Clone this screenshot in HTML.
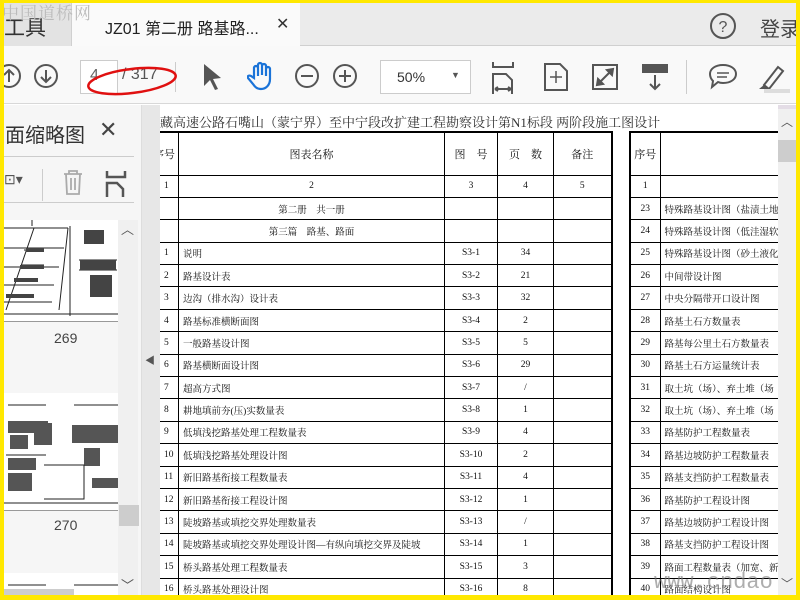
<!DOCTYPE html>
<html><head><meta charset="utf-8">
<style>
*{margin:0;padding:0;box-sizing:border-box}
body{width:800px;height:600px;overflow:hidden;background:#ffe800;font-family:"Liberation Sans","Noto Sans CJK SC",sans-serif;position:relative}
#app{position:absolute;left:4px;top:3px;width:792px;height:592px;background:#fff;overflow:hidden}
.abs{position:absolute}
#tabbar{left:0;top:0;width:792px;height:43px;background:#ebebeb;border-bottom:1px solid #d0d0d0}
#toolbar{left:0;top:43px;width:792px;height:58px;background:#f9f9f9;border-bottom:1px solid #d8d8d8}
#left{left:0;top:102px;width:141px;height:490px;background:#f6f6f6}
#strip{left:137px;top:102px;width:19px;height:490px;background:#e7e7e7;border-left:1px solid #ddd}
#doc{left:156px;top:102px;width:618px;height:490px;background:#fff;overflow:hidden}
#vs{left:774px;top:102px;width:18px;height:490px;background:#f0f0f0}
table{border-collapse:collapse;table-layout:fixed;position:absolute;font-family:"Liberation Serif","Noto Serif CJK SC",serif;font-size:9.5px;color:#111}
td{border:1px solid #000;height:22.4px;padding:0 0 0 4px;white-space:nowrap;overflow:hidden}
td.c{text-align:center;padding:0}
td.s{padding-left:15px}
tr.h td{height:43px;font-size:11px}
.ico{stroke:#555;fill:none;stroke-width:2}
</style></head><body>
<div id="app">
 <div class="abs" id="tabbar">
  <div class="abs" style="left:-4px;top:0;width:72px;height:43px;background:#e3e3e3;border-right:1px solid #d0d0d0"></div>
  <div class="abs" style="left:0;top:9px;font-size:21px;color:#333">工具</div>
  <div class="abs" style="left:68px;top:0;width:228px;height:44px;background:#fafafa"></div>
  <div class="abs" style="left:101px;top:12px;font-size:16px;color:#222;white-space:nowrap">JZ01 第二册 路基路...</div>
  <div class="abs" style="left:272px;top:11px;font-size:16px;color:#333">✕</div>
  <svg class="abs" style="left:704px;top:8px" width="30" height="30"><circle cx="15" cy="15" r="12" class="ico"/><text x="15" y="21" text-anchor="middle" font-size="16" fill="#555" font-family="Liberation Sans">?</text></svg>
  <div class="abs" style="left:756px;top:10px;font-size:20px;color:#444;white-space:nowrap">登录</div>
  <div class="abs" style="left:-2px;top:-4px;font-size:17px;color:#bbb;letter-spacing:1px;font-family:'Noto Serif CJK SC',serif;white-space:nowrap">中国道桥网</div>
 </div>
 <div class="abs" id="toolbar">
  <svg class="abs" style="left:-8px;top:17px" width="26" height="26"><circle cx="13" cy="13" r="11" class="ico"/><path d="M13 19V7M8 12l5-5 5 5" class="ico"/></svg>
  <svg class="abs" style="left:29px;top:17px" width="26" height="26"><circle cx="13" cy="13" r="11" class="ico"/><path d="M13 7v12M8 14l5 5 5-5" class="ico"/></svg>
  <div class="abs" style="left:76px;top:14px;width:38px;height:34px;background:#fff;border:1px solid #ccc;font-size:16px;color:#666;padding:6px 0 0 9px">4</div>
  <div class="abs" style="left:118px;top:20px;font-size:16px;color:#555;white-space:nowrap">/ 317</div>
  <div class="abs" style="left:171px;top:16px;width:1px;height:30px;background:#ccc"></div>
  <svg class="abs" style="left:80px;top:14px" width="100" height="44"><ellipse cx="48" cy="21" rx="44" ry="12" fill="none" stroke="#e01010" stroke-width="2.5" transform="rotate(-7 48 21)"/></svg>
  <svg class="abs" style="left:196px;top:16px" width="24" height="30"><path d="M4 2v22l6-6 5 10 3-1-5-10 8-1z" fill="#555"/></svg>
  <svg class="abs" style="left:243px;top:14px" width="32" height="32"><path d="M7 18V8a2 2 0 014 0v8V5a2 2 0 014 0v10V6a2 2 0 014 0v10V9a2 2 0 014 0v10c0 6-4 10-9 10-4 0-6-2-8-5l-5-6c-1-2 1-3 3-2z" fill="none" stroke="#1a73d8" stroke-width="2.2"/></svg>
  <svg class="abs" style="left:290px;top:17px" width="26" height="26"><circle cx="13" cy="13" r="11" class="ico"/><path d="M7 13h12" class="ico"/></svg>
  <svg class="abs" style="left:328px;top:17px" width="26" height="26"><circle cx="13" cy="13" r="11" class="ico"/><path d="M7 13h12M13 7v12" class="ico"/></svg>
  <div class="abs" style="left:376px;top:14px;width:91px;height:34px;background:#fff;border:1px solid #ccc;font-size:14px;color:#333;padding:8px 0 0 16px">50%<span style="position:absolute;left:70px;top:9px;font-size:9px;color:#555">▼</span></div>
  <svg class="abs" style="left:486px;top:16px" width="28" height="32"><path d="M3 0v5h20V0M3 32V12h13l6 6v14M5 27h16M5 27l3-2M5 27l3 2M21 27l-3-2M21 27l-3 2" class="ico"/></svg>
  <svg class="abs" style="left:538px;top:16px" width="28" height="30"><path d="M3 2h15l7 7v19H3z" class="ico"/><path d="M14 9v12M8 15h12" stroke="#555" stroke-width="1.5"/></svg>
  <svg class="abs" style="left:587px;top:17px" width="28" height="28"><rect x="2" y="2" width="24" height="24" class="ico"/><path d="M10 18l9-9M6 22l6-1-5-5zM22 6l-6 1 5 5z" fill="#555" stroke="#555" stroke-width="2"/></svg>
  <svg class="abs" style="left:636px;top:16px" width="30" height="30"><rect x="2" y="2" width="26" height="9" fill="#555"/><path d="M15 13v14M10 22l5 5 5-5" class="ico"/></svg>
  <div class="abs" style="left:682px;top:14px;width:1px;height:34px;background:#ccc"></div>
  <svg class="abs" style="left:703px;top:16px" width="32" height="30"><path d="M16 3c8 0 13 4 13 9s-5 9-13 9c-2 0-3 0-5-1l-6 5 1-6C4 17 3 15 3 12c0-5 5-9 13-9z" class="ico"/><path d="M10 11h12M10 15h10" stroke="#555" stroke-width="1.5"/></svg>
  <svg class="abs" style="left:750px;top:15px" width="36" height="34"><path d="M10 24l14-18 5 4-14 18z" class="ico"/><path d="M5 28l5-4 4 4z" fill="#555"/><rect x="10" y="28" width="26" height="4" fill="#ddd"/></svg>
 </div>
 <div class="abs" id="left">
  <div class="abs" style="left:1px;top:14px;font-size:20px;color:#333;white-space:nowrap">面缩略图</div>
  <div class="abs" style="left:95px;top:12px;font-size:22px;color:#444">✕</div>
  <div class="abs" style="left:0;top:51px;width:130px;height:1px;background:#ccc"></div>
  <div class="abs" style="left:0;top:66px;font-size:14px;color:#555">⊡▾</div>
  <div class="abs" style="left:38px;top:64px;width:1px;height:32px;background:#ccc"></div>
  <svg class="abs" style="left:58px;top:64px" width="22" height="28"><path d="M2 5h18M7 5V2h8v3M4 5l1 20h12l1-20M9 9v12M13 9v12" stroke="#aaa" stroke-width="1.8" fill="none"/></svg>
  <svg class="abs" style="left:100px;top:66px" width="24" height="28"><path d="M3 0v6h18V0M3 26V12h10l6 6v8" stroke="#555" stroke-width="2.5" fill="none"/></svg>
  <div class="abs" style="left:0;top:97px;width:130px;height:1px;background:#ccc"></div>
  <div class="abs" style="left:0;top:115px;width:114px;height:102px;background:#fff;border-bottom:1px solid #999">
   <svg width="114" height="102"><g stroke="#222" stroke-width="1" fill="none"><path d="M0 8h64M66 6v90M0 28h60M0 47h55M0 65h50M0 82h48M0 94h114M75 40h38M75 50h38M28 0v6M20 30h20M18 45h22M10 60h24M2 75h28"/><path d="M30 8L2 90M64 8L55 90"/></g><g fill="#444"><rect x="22" y="28" width="18" height="4"/><rect x="16" y="45" width="24" height="4"/><rect x="10" y="58" width="24" height="4"/><rect x="2" y="74" width="28" height="4"/><rect x="76" y="40" width="36" height="10"/><rect x="86" y="55" width="22" height="22"/><rect x="80" y="10" width="20" height="14"/></g></svg>
  </div>
  <div class="abs" style="left:50px;top:225px;font-size:14px;color:#444">269</div>
  <div class="abs" style="left:0;top:288px;width:114px;height:118px;background:#fff;border-bottom:1px solid #999">
   <svg width="114" height="118"><g fill="#555"><rect x="4" y="28" width="40" height="12"/><rect x="30" y="30" width="18" height="22"/><rect x="68" y="32" width="46" height="18"/><rect x="4" y="65" width="28" height="12"/><rect x="80" y="55" width="16" height="18"/><rect x="4" y="80" width="24" height="18"/><rect x="88" y="85" width="26" height="10"/><rect x="6" y="42" width="18" height="14"/></g><g stroke="#222" fill="none"><path d="M4 12h38M70 12h44M0 110h114M2 62h40M40 72h40v34H40"/></g></svg>
  </div>
  <div class="abs" style="left:50px;top:412px;font-size:14px;color:#444">270</div>
  <div class="abs" style="left:0;top:468px;width:114px;height:22px;background:#fff"><svg width="114" height="22"><path d="M4 12h38M70 12h44" stroke="#222"/></svg></div>
  <div class="abs" style="left:114px;top:115px;width:20px;height:375px;background:#f0f0f0"></div>
  <div class="abs" style="left:117px;top:114px;font-size:13px;color:#555">︿</div>
  <div class="abs" style="left:115px;top:400px;width:20px;height:21px;background:#cdcdcd"></div>
  <div class="abs" style="left:117px;top:470px;font-size:13px;color:#555">﹀</div>
  <div class="abs" style="left:0;top:484px;width:70px;height:6px;background:#cdcdcd"></div>
 </div>
 <div class="abs" id="strip"><div class="abs" style="left:3px;top:247px;font-size:10px;color:#555">◀</div></div>
 <div class="abs" id="doc">
  <div class="abs" style="left:0;top:7px;font-size:13px;color:#333;font-family:'Liberation Serif','Noto Serif CJK SC',serif;white-space:nowrap">藏高速公路石嘴山（蒙宁界）至中宁段改扩建工程勘察设计第N1标段  两阶段施工图设计</div>
  <table style="left:-12px;top:26px;width:463px;border-top:2px solid #000;border-right:2px solid #000">
   <colgroup><col style="width:30px"><col style="width:266px"><col style="width:53px"><col style="width:56px"><col style="width:58px"></colgroup>
   <tr class="h"><td class="s" style="padding-left:4px">序号</td><td class="c">图表名称</td><td class="c">图　号</td><td class="c">页　数</td><td class="c">备注</td></tr>
   <tr><td class="s">1</td><td class="c">2</td><td class="c">3</td><td class="c">4</td><td class="c">5</td></tr>
   <tr><td></td><td class="c">第二册　共一册</td><td></td><td></td><td></td></tr>
   <tr><td></td><td class="c">第三篇　路基、路面</td><td></td><td></td><td></td></tr>
   <tr><td class="s">1</td><td>说明</td><td class="c">S3-1</td><td class="c">34</td><td></td></tr>
   <tr><td class="s">2</td><td>路基设计表</td><td class="c">S3-2</td><td class="c">21</td><td></td></tr>
   <tr><td class="s">3</td><td>边沟（排水沟）设计表</td><td class="c">S3-3</td><td class="c">32</td><td></td></tr>
   <tr><td class="s">4</td><td>路基标准横断面图</td><td class="c">S3-4</td><td class="c">2</td><td></td></tr>
   <tr><td class="s">5</td><td>一般路基设计图</td><td class="c">S3-5</td><td class="c">5</td><td></td></tr>
   <tr><td class="s">6</td><td>路基横断面设计图</td><td class="c">S3-6</td><td class="c">29</td><td></td></tr>
   <tr><td class="s">7</td><td>超高方式图</td><td class="c">S3-7</td><td class="c">/</td><td></td></tr>
   <tr><td class="s">8</td><td>耕地填前夯(压)实数量表</td><td class="c">S3-8</td><td class="c">1</td><td></td></tr>
   <tr><td class="s">9</td><td>低填浅挖路基处理工程数量表</td><td class="c">S3-9</td><td class="c">4</td><td></td></tr>
   <tr><td class="s">10</td><td>低填浅挖路基处理设计图</td><td class="c">S3-10</td><td class="c">2</td><td></td></tr>
   <tr><td class="s">11</td><td>新旧路基衔接工程数量表</td><td class="c">S3-11</td><td class="c">4</td><td></td></tr>
   <tr><td class="s">12</td><td>新旧路基衔接工程设计图</td><td class="c">S3-12</td><td class="c">1</td><td></td></tr>
   <tr><td class="s">13</td><td>陡坡路基或填挖交界处理数量表</td><td class="c">S3-13</td><td class="c">/</td><td></td></tr>
   <tr><td class="s">14</td><td>陡坡路基或填挖交界处理设计图—有纵向填挖交界及陡坡</td><td class="c">S3-14</td><td class="c">1</td><td></td></tr>
   <tr><td class="s">15</td><td>桥头路基处理工程数量表</td><td class="c">S3-15</td><td class="c">3</td><td></td></tr>
   <tr><td class="s">16</td><td>桥头路基处理设计图</td><td class="c">S3-16</td><td class="c">8</td><td></td></tr>
  </table>
  <table style="left:469px;top:26px;width:180px;border-top:2px solid #000;border-left:2px solid #000">
   <colgroup><col style="width:30px"><col style="width:150px"></colgroup>
   <tr class="h"><td class="c">序号</td><td style="padding-left:140px">图</td></tr>
   <tr><td class="c">1</td><td></td></tr>
   <tr><td class="c">23</td><td>特殊路基设计图（盐渍土地</td></tr>
   <tr><td class="c">24</td><td>特殊路基设计图（低洼湿软</td></tr>
   <tr><td class="c">25</td><td>特殊路基设计图（砂土液化</td></tr>
   <tr><td class="c">26</td><td>中间带设计图</td></tr>
   <tr><td class="c">27</td><td>中央分隔带开口设计图</td></tr>
   <tr><td class="c">28</td><td>路基土石方数量表</td></tr>
   <tr><td class="c">29</td><td>路基每公里土石方数量表</td></tr>
   <tr><td class="c">30</td><td>路基土石方运量统计表</td></tr>
   <tr><td class="c">31</td><td>取土坑（场）、弃土堆（场</td></tr>
   <tr><td class="c">32</td><td>取土坑（场）、弃土堆（场</td></tr>
   <tr><td class="c">33</td><td>路基防护工程数量表</td></tr>
   <tr><td class="c">34</td><td>路基边坡防护工程数量表</td></tr>
   <tr><td class="c">35</td><td>路基支挡防护工程数量表</td></tr>
   <tr><td class="c">36</td><td>路基防护工程设计图</td></tr>
   <tr><td class="c">37</td><td>路基边坡防护工程设计图</td></tr>
   <tr><td class="c">38</td><td>路基支挡防护工程设计图</td></tr>
   <tr><td class="c">39</td><td>路面工程数量表（加宽、新</td></tr>
   <tr><td class="c">40</td><td>路面结构设计图</td></tr>
  </table>
  <div class="abs" style="left:494px;top:465px;font-size:22px;color:rgba(120,120,120,.6);font-family:'Liberation Mono',monospace;white-space:nowrap">www.cndao.com</div>
 </div>
 <div class="abs" id="vs">
  <div class="abs" style="left:0;top:0;width:18px;height:4px;background:#e4dde6"></div>
  <div class="abs" style="left:3px;top:8px;font-size:12px;color:#555">︿</div>
  <div class="abs" style="left:0;top:35px;width:18px;height:22px;background:#cdcdcd"></div>
  <div class="abs" style="left:3px;top:470px;font-size:12px;color:#555">﹀</div>
 </div>
</div>
</body></html>
